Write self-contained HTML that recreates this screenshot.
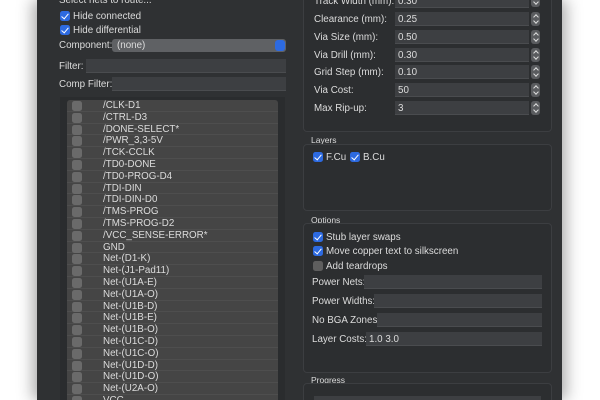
<!DOCTYPE html><html><head><style>
*{box-sizing:border-box;margin:0;padding:0}
html,body{width:600px;height:400px;overflow:hidden}
body{background:#fff;position:relative;font-family:"Liberation Sans",sans-serif;font-size:9.8px;color:#dcdcdc}
.win{position:absolute;left:37px;top:0;width:525px;height:400px;background:#2f3133;box-shadow:-6px 0 14px rgba(0,0,0,.25),6px 0 14px rgba(0,0,0,.25)}
.a{position:absolute;white-space:nowrap}
.cb{position:absolute;width:10px;height:10px;border-radius:2.5px;background:#2d6ae0}
.cb:after{content:"";position:absolute;left:3px;top:0.5px;width:3px;height:6px;border:solid #fff;border-width:0 1.6px 1.6px 0;transform:rotate(40deg)}
.off{position:absolute;width:10px;height:10px;border-radius:2.5px;background:#5e5e5e}
.in{position:absolute;background:#3d3f42;height:14px;border-bottom:1px solid #4a4c4f}
.grp{position:absolute;border:1px solid #3c3e41;border-radius:4px;background:#2c2e30}
.sp{position:absolute;width:9px;height:14px;border-radius:3px;background:#5a5c5f}
.sp:before,.sp:after{content:"";position:absolute;left:2.5px;width:3px;height:3px;border:solid #ddd;border-width:1px 0 0 1px}
.sp:before{top:3px;transform:rotate(45deg)}.sp:after{top:7px;transform:rotate(225deg)}
.row{position:absolute;left:67px;width:211px;height:11.8px;border-bottom:1px solid #4e4e4e}
.row .off{left:5px;top:1px;background:#6a6a6a}
.row span{position:absolute;left:36px;top:0px}
</style></head><body>
<div class="win"></div>
<div class="a" style="left:59px;top:-5px">Select nets to route...</div>
<div class="cb" style="left:60px;top:11px"></div><div class="a" style="left:73px;top:11px">Hide connected</div>
<div class="cb" style="left:60px;top:25px"></div><div class="a" style="left:73px;top:25px">Hide differential</div>
<div class="a" style="left:59px;top:40px">Component:</div>
<div style="position:absolute;left:112px;top:39px;width:174px;height:13px;border-radius:3px;background:#5f6164"></div>
<div class="a" style="left:117px;top:40px">(none)</div>
<div style="position:absolute;left:275px;top:40px;width:10px;height:11px;border-radius:3px;background:#2d6ae0"></div>
<div class="a" style="left:59px;top:61px">Filter:</div><div class="in" style="left:86px;top:59px;width:200px"></div>
<div class="a" style="left:59px;top:79px">Comp Filter:</div><div class="in" style="left:112px;top:77px;width:174px"></div>
<div style="position:absolute;left:60px;top:97px;width:225px;height:303px;background:#2a2c2e"></div>
<div style="position:absolute;left:67px;top:100px;width:211px;height:300px;background:#454545;border-radius:3px 3px 0 0;overflow:hidden">
<div class="row" style="left:0;top:0px"><i class="off"></i><span>/CLK-D1</span></div>
<div class="row" style="left:0;top:11.8px"><i class="off"></i><span>/CTRL-D3</span></div>
<div class="row" style="left:0;top:23.6px"><i class="off"></i><span>/DONE-SELECT*</span></div>
<div class="row" style="left:0;top:35.4px"><i class="off"></i><span>/PWR_3,3-5V</span></div>
<div class="row" style="left:0;top:47.2px"><i class="off"></i><span>/TCK-CCLK</span></div>
<div class="row" style="left:0;top:59px"><i class="off"></i><span>/TD0-DONE</span></div>
<div class="row" style="left:0;top:70.8px"><i class="off"></i><span>/TD0-PROG-D4</span></div>
<div class="row" style="left:0;top:82.6px"><i class="off"></i><span>/TDI-DIN</span></div>
<div class="row" style="left:0;top:94.4px"><i class="off"></i><span>/TDI-DIN-D0</span></div>
<div class="row" style="left:0;top:106.2px"><i class="off"></i><span>/TMS-PROG</span></div>
<div class="row" style="left:0;top:118px"><i class="off"></i><span>/TMS-PROG-D2</span></div>
<div class="row" style="left:0;top:129.8px"><i class="off"></i><span>/VCC_SENSE-ERROR*</span></div>
<div class="row" style="left:0;top:141.6px"><i class="off"></i><span>GND</span></div>
<div class="row" style="left:0;top:153.4px"><i class="off"></i><span>Net-(D1-K)</span></div>
<div class="row" style="left:0;top:165.2px"><i class="off"></i><span>Net-(J1-Pad11)</span></div>
<div class="row" style="left:0;top:177px"><i class="off"></i><span>Net-(U1A-E)</span></div>
<div class="row" style="left:0;top:188.8px"><i class="off"></i><span>Net-(U1A-O)</span></div>
<div class="row" style="left:0;top:200.6px"><i class="off"></i><span>Net-(U1B-D)</span></div>
<div class="row" style="left:0;top:212.4px"><i class="off"></i><span>Net-(U1B-E)</span></div>
<div class="row" style="left:0;top:224.2px"><i class="off"></i><span>Net-(U1B-O)</span></div>
<div class="row" style="left:0;top:236px"><i class="off"></i><span>Net-(U1C-D)</span></div>
<div class="row" style="left:0;top:247.8px"><i class="off"></i><span>Net-(U1C-O)</span></div>
<div class="row" style="left:0;top:259.6px"><i class="off"></i><span>Net-(U1D-D)</span></div>
<div class="row" style="left:0;top:271.4px"><i class="off"></i><span>Net-(U1D-O)</span></div>
<div class="row" style="left:0;top:283.2px"><i class="off"></i><span>Net-(U2A-O)</span></div>
<div class="row" style="left:0;top:295px"><i class="off"></i><span>VCC</span></div>
</div>

<div class="grp" style="left:303px;top:-5px;width:249px;height:137px"></div>
<div class="a" style="left:314px;top:-4px">Track Width (mm):</div><div class="in" style="left:395px;top:-6px;width:134px"></div><div class="a" style="left:398px;top:-4px">0.30</div><div class="sp" style="left:531px;top:-7px"></div>
<div class="a" style="left:314px;top:14px">Clearance (mm):</div><div class="in" style="left:395px;top:12px;width:134px"></div><div class="a" style="left:398px;top:14px">0.25</div><div class="sp" style="left:531px;top:12px"></div>
<div class="a" style="left:314px;top:32px">Via Size (mm):</div><div class="in" style="left:395px;top:30px;width:134px"></div><div class="a" style="left:398px;top:32px">0.50</div><div class="sp" style="left:531px;top:30px"></div>
<div class="a" style="left:314px;top:50px">Via Drill (mm):</div><div class="in" style="left:395px;top:48px;width:134px"></div><div class="a" style="left:398px;top:50px">0.30</div><div class="sp" style="left:531px;top:48px"></div>
<div class="a" style="left:314px;top:67px">Grid Step (mm):</div><div class="in" style="left:395px;top:65px;width:134px"></div><div class="a" style="left:398px;top:67px">0.10</div><div class="sp" style="left:531px;top:65px"></div>
<div class="a" style="left:314px;top:85px">Via Cost:</div><div class="in" style="left:395px;top:83px;width:134px"></div><div class="a" style="left:398px;top:85px">50</div><div class="sp" style="left:531px;top:83px"></div>
<div class="a" style="left:314px;top:103px">Max Rip-up:</div><div class="in" style="left:395px;top:101px;width:134px"></div><div class="a" style="left:398px;top:103px">3</div><div class="sp" style="left:531px;top:101px"></div>

<div class="a" style="left:311px;top:135px;font-size:8.5px">Layers</div>
<div class="grp" style="left:303px;top:144px;width:249px;height:67px"></div>
<div class="cb" style="left:313px;top:152px"></div><div class="a" style="left:326px;top:152px">F.Cu</div>
<div class="cb" style="left:350px;top:152px"></div><div class="a" style="left:363px;top:152px">B.Cu</div>

<div class="a" style="left:311px;top:215px;font-size:8.5px">Options</div>
<div class="grp" style="left:303px;top:223px;width:249px;height:150px"></div>
<div class="cb" style="left:313px;top:232px"></div><div class="a" style="left:326px;top:232px">Stub layer swaps</div>
<div class="cb" style="left:313px;top:246px"></div><div class="a" style="left:326px;top:246px">Move copper text to silkscreen</div>
<div class="off" style="left:313px;top:261px"></div><div class="a" style="left:326px;top:261px">Add teardrops</div>
<div class="a" style="left:312px;top:277px">Power Nets:</div><div class="in" style="left:364px;top:275px;width:178px"></div>
<div class="a" style="left:312px;top:296px">Power Widths:</div><div class="in" style="left:374px;top:294px;width:168px"></div>
<div class="a" style="left:312px;top:315px">No BGA Zones:</div><div class="in" style="left:377px;top:313px;width:165px"></div>
<div class="a" style="left:312px;top:334px">Layer Costs:</div><div class="in" style="left:366px;top:332px;width:176px"></div><div class="a" style="left:369px;top:334px">1.0 3.0</div>

<div class="a" style="left:311px;top:375px;font-size:8.5px">Progress</div>
<div class="grp" style="left:303px;top:383px;width:249px;height:30px"></div>
<div style="position:absolute;left:314px;top:396px;width:227px;height:6px;background:#3d3f42"></div>
</body></html>
